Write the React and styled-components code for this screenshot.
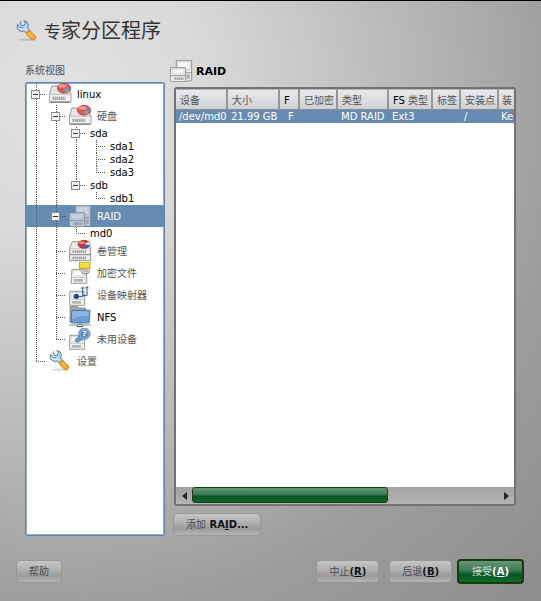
import React from 'react';
import styled, { createGlobalStyle, css } from 'styled-components';

const GlobalStyle = createGlobalStyle`
  * { box-sizing: border-box; }
  body {
    margin: 0;
    font: 10px/13px "DejaVu Sans", "Noto Sans CJK SC", sans-serif;
    color: #000;
  }
  button { font: inherit; padding: 0; margin: 0; }
`;

const Page = styled.div`
  min-height: 100vh;
  display: flex;
  flex-direction: column;
  border-top: 2px solid #000;
  border-top-width: 1px;
  background: radial-gradient(ellipse 130% 120% at 12% 16%, #e2e2e2 0%, #d9d9d9 20%, #b6b6b6 50%, #9c9c9c 72%, #8c8c8c 100%);
`;

const TitleBar = styled.header`
  display: flex;
  align-items: center;
  gap: 4px;
  height: 60px;
  padding: 0 16px;
`;

const Title = styled.h1`
  margin: 0;
  font-size: 20px;
  line-height: 28px;
  font-weight: 400;
  color: #333;
`;

const TitleLead = styled.span`
  font-size: 17px;
`;

const Main = styled.main`
  flex: 1;
  display: grid;
  grid-template-columns: minmax(140px, 26%) minmax(0, 1fr);
  gap: 5px;
  padding: 0 25px 0 25px;
`;

const Side = styled.section`
  display: flex;
  flex-direction: column;
`;

const SideLabel = styled.h2`
  margin: 0;
  padding-top: 3px;
  height: 21px;
  font-size: 10px;
  font-weight: 400;
  color: #505050;
`;

const Tree = styled.ul`
  flex: 1;
  margin: 0;
  padding: 0;
  list-style: none;
  background: #fff;
  border: 1px solid #5f86ae;
  border-radius: 2px;
  box-shadow: inset 0 0 0 1px #8fadcb;
`;

const TreeRow = styled.li`
  display: flex;
  align-items: center;
  height: ${(p) => (p.$tall ? 22 : 13)}px;
  background: ${(p) => (p.$selected ? '#678cb2' : 'transparent')};
  color: ${(p) => (p.$selected ? '#fff' : p.$dim ? '#555' : '#000')};
`;

const dots = '#555 0 1px, transparent 1px 2px';
const vertical = `repeating-linear-gradient(to bottom, ${dots})`;
const horizontal = `repeating-linear-gradient(to right, ${dots})`;

const guides = {
  none: css``,
  line: css`
    background: ${vertical} 10px 0 / 1px 100% no-repeat;
  `,
  tee: css`
    background: ${vertical} 10px 0 / 1px 100% no-repeat, ${horizontal} 10px 50% / 9px 1px no-repeat;
  `,
  end: css`
    background: ${vertical} 10px 0 / 1px 50% no-repeat, ${horizontal} 10px 50% / 9px 1px no-repeat;
  `,
};

const Guide = styled.span`
  flex: none;
  display: flex;
  align-items: center;
  width: 20px;
  height: 100%;
  padding-left: 5px;
  ${(p) => guides[p.$kind]}
`;

const Expander = styled.button`
  width: 9px;
  height: 9px;
  border: 1px solid #8a8a8a;
  background: linear-gradient(#333, #333) center / 5px 1px no-repeat, #f4f4f4;
`;

const TreeIcon = styled.span`
  flex: none;
  display: flex;
  width: 24px;
  height: 22px;
  margin-left: 3px;
  opacity: ${(p) => (p.$selected ? 0.65 : 1)};
`;

const TreeLabel = styled.span`
  flex: 1;
  white-space: nowrap;
  padding-left: 4px;
  ${(p) => p.$selected && css`
    height: 21px;
    line-height: 20px;
    border: 1px dotted #b0763c;
    padding-left: 3px;
  `}
`;

const Content = styled.section`
  display: flex;
  flex-direction: column;
  min-width: 0;
`;

const Heading = styled.h2`
  display: flex;
  align-items: center;
  gap: 2px;
  height: 26px;
  margin: 0;
  padding-bottom: 6px;
  font-size: 11px;
  font-weight: 700;
`;

const List = styled.div`
  flex: 1;
  display: flex;
  flex-direction: column;
  margin-left: 4px;
  border: 2px solid #737373;
  border-radius: 3px;
  background: #fff;
`;

const TableArea = styled.div`
  flex: 1;
  overflow: hidden;
`;

const Table = styled.table`
  width: 100%;
  table-layout: fixed;
  border-collapse: separate;
  border-spacing: 0;
  white-space: nowrap;
`;

const Column = styled.col`
  width: ${(p) => (p.$width ? `${p.$width}px` : 'auto')};
`;

const Th = styled.th`
  height: 21px;
  padding: 2px 0 0 4px;
  text-align: left;
  font-weight: 400;
  color: ${(p) => (p.$latin ? '#000' : '#555')};
  background: linear-gradient(#eaeaed, #cfcfd5);
  border-top: 1px solid #b5b5b5;
  border-right: 2px solid #969696;
  border-bottom: 1px solid #8c8c90;

  &:last-child { border-right: 0; padding-left: 3px; }
  span { color: #555; }
`;

const Td = styled.td`
  height: 13px;
  padding: 0 0 0 ${(p) => (p.$inset ? 8 : 3)}px;
  color: #fff;
  background: #678cb2;

  &:last-child { padding-left: 2px; }
`;

const ScrollBar = styled.div`
  display: flex;
  height: 17px;
  background: linear-gradient(#a2a2a2, #b4b4b4);
`;

const ScrollArrow = styled.button`
  display: flex;
  align-items: center;
  justify-content: center;
  width: 16px;
  border: 0;
  background: transparent;
`;

const ScrollTrack = styled.div`
  flex: 1;
`;

const ScrollThumb = styled.div`
  width: 64%;
  height: 16px;
  border: 1px solid #17420f;
  border-radius: 3px;
  background: linear-gradient(#659477, #3b7a53 45%, #075424 60%, #0d6427);
`;

const Actions = styled.div`
  display: flex;
  padding: 7px 0 0 3px;
`;

const Button = styled.button`
  height: 23px;
  padding: 0 12px;
  font-weight: 700;
  white-space: nowrap;
  color: #111;
  border: 1px solid #979797;
  border-radius: 4px;
  background: linear-gradient(#c6c6c6, #ababab 50%, #9b9b9b 70%, #b4b4b4);

  ${(p) => p.$primary && css`
    height: 25px;
    padding: 0 13px;
    color: #fff;
    border: 2px solid #173c0c;
    background: linear-gradient(#6a967b, #3b7a53 45%, #075424 65%, #0d6c2b);
  `}
`;

const Cjk = styled.span`
  font-weight: 400;
  color: ${(p) => (p.$light ? '#cfe0d5' : '#4c4c4c')};
`;

const Footer = styled.footer`
  display: flex;
  align-items: center;
  gap: 10px;
  padding: 23px 17px 17px 16px;
`;

const Spacer = styled.div`
  flex: 1;
`;

const FinishGroup = styled.div`
  display: flex;
  align-items: center;
  gap: 5px;
`;

function Svg({ children }) {
  return (
    <svg width="24" height="22" viewBox="0 0 72 66" aria-hidden="true">
      {children}
    </svg>
  );
}

function Slots({ x, y, w, h }) {
  return (
    <g>
      <rect x={x} y={y} width={w} height={h} fill="#c4c4c4" />
      <path d={`M${x + 3} ${y + h / 2}H${x + w}`} stroke="#9b9b9b" strokeWidth={h} strokeDasharray="2 4" />
    </g>
  );
}

function Disc({ y = 16 }) {
  return (
    <g>
      <ellipse cx="45" cy={y} rx="20" ry="15" fill="#e8504c" stroke="#c0332e" strokeWidth="2" />
      <ellipse cx="41" cy={y - 7} rx="13" ry="5" fill="#f29a95" />
      <path d={`M46 ${y}L58 ${y - 5}A15 12 0 0 1 58 ${y + 7}Z`} fill="#6f97d6" />
      <path d={`M46 ${y}L59 ${y + 7}A16 13 0 0 1 48 ${y + 12}Z`} fill="#84b866" />
      <path d={`M46 ${y}L48 ${y + 12}L38 ${y + 9}Z`} fill="#6680bd" />
    </g>
  );
}

function DiskIcon() {
  return (
    <Svg>
      <path d="M9 9H57L66 34V54Q66 58 62 58H4Q1 58 1 54V34Z" fill="#e6e6e6" stroke="#858585" strokeWidth="2.5" />
      <path d="M3 34H64V55H3Z" fill="#f2f2f2" />
      <path d="M2 34H65" stroke="#aaa" strokeWidth="2" />
      <Slots x={9} y={41} w={40} h={10} />
      <path d="M2 57H65" stroke="#6f6f6f" strokeWidth="3" />
      <Disc />
    </Svg>
  );
}

function VolumeIcon() {
  return (
    <Svg>
      <path d="M10 5H56L65 25V62H2V25Z" fill="#ececec" stroke="#808080" strokeWidth="2.5" />
      <path d="M2 44H65" stroke="#808080" strokeWidth="3" />
      <path d="M2 26H65" stroke="#b5b5b5" strokeWidth="2" />
      <Slots x={9} y={31} w={42} h={8} />
      <Slots x={9} y={50} w={42} h={8} />
      <ellipse cx="45" cy="13" rx="18" ry="12" fill="#dc3436" stroke="#98191c" strokeWidth="2" />
      <ellipse cx="38" cy="8" rx="9" ry="4" fill="#ee8a88" />
      <path d="M45 13L58 5A17 11 0 0 1 62 16Z" fill="#f2f2f2" />
      <path d="M45 13L62 16A17 11 0 0 1 45 25Z" fill="#3e67b2" />
    </Svg>
  );
}

function RaidIcon() {
  return (
    <Svg>
      <path d="M19 1H65V60Q65 63 61 63H22Q19 63 19 59Z" fill="#ececec" stroke="#848484" strokeWidth="2.5" />
      <path d="M24 5H60V27Q42 35 24 27Z" fill="#fafafa" stroke="#c6c6c6" strokeWidth="2" />
      <path d="M19 38H65" stroke="#848484" strokeWidth="2.5" />
      <Slots x={50} y={43} w={10} h={14} />
      <path d="M1 23H47V62Q47 65 43 65H5Q1 65 1 61Z" fill="#ececec" stroke="#848484" strokeWidth="2.5" />
      <path d="M6 27H42V40Q24 47 6 40Z" fill="#fafafa" stroke="#c6c6c6" strokeWidth="2" />
      <path d="M1 47H47" stroke="#848484" strokeWidth="2.5" />
      <Slots x={12} y={52} w={28} h={8} />
    </Svg>
  );
}

function SmallDrive({ x = 0 }) {
  return (
    <g transform={`translate(${x} 0)`}>
      <path d="M3 22H45L47 46V64H1V46Z" fill="#f1f1f1" stroke="#868686" strokeWidth="2.5" strokeLinejoin="round" />
      <path d="M7 26H41L42 39Q24 46 6 39Z" fill="#fbfbfb" stroke="#d0d0d0" strokeWidth="2" />
      <path d="M1 46H47" stroke="#b0b0b0" strokeWidth="2" />
      <Slots x={8} y={51} w={28} h={8} />
    </g>
  );
}

function CryptIcon() {
  return (
    <Svg>
      <SmallDrive x={6} />
      <path d="M39 20V25Q39 32 46 32H51Q58 32 58 25V20" fill="none" stroke="#8a8a80" strokeWidth="8" />
      <path d="M39 20V25Q39 31 46 31H51Q58 31 58 25V20" fill="none" stroke="#dcdcd4" strokeWidth="4" />
      <rect x="31" y="0" width="32" height="19" fill="#f1d92c" stroke="#b79a0b" strokeWidth="2.5" />
      <path d="M34 5H60M34 11H60" stroke="#fff07c" strokeWidth="2" />
    </Svg>
  );
}

function MapperIcon() {
  return (
    <Svg>
      <SmallDrive />
      <path d="M22 37H41V12M36 14L41 9L46 14M41 35H54V9M49 13L54 8L59 13" fill="none" stroke="#1f5294" strokeWidth="3" />
      <circle cx="22" cy="37" r="8" fill="#174b8a" />
    </Svg>
  );
}

function NfsIcon() {
  return (
    <Svg>
      <path d="M3 49V4Q3 1 7 1H24L30 6H50V15H12V49Z" fill="#a3a5a3" stroke="#777a76" strokeWidth="2" />
      <path d="M9 13H63L61 49Q61 51 58 51H9Q6 51 6 48Z" fill="#6b9dd5" stroke="#3a6aa5" strokeWidth="2.5" />
      <path d="M10 16H60L59 30Q34 28 9 38Z" fill="#8db6e2" />
      <path d="M0 57H66" stroke="#8a8d89" strokeWidth="3" />
      <path d="M33 52V60" stroke="#666" strokeWidth="5" />
      <ellipse cx="33" cy="59" rx="10" ry="5" fill="#666" />
      <path d="M27 58H39" stroke="#eee" strokeWidth="4" />
    </Svg>
  );
}

function UnusedIcon() {
  return (
    <Svg>
      <SmallDrive />
      <path d="M31 24L19 34Q17 43 27 43L42 33Z" fill="#6d98cc" stroke="#4b79b2" strokeWidth="2" />
      <circle cx="46" cy="17" r="17" fill="#8fb4e0" stroke="#4b79b2" strokeWidth="2.5" />
      <circle cx="46" cy="17" r="12" fill="#5d8cc5" />
      <text x="46" y="25" textAnchor="middle" fontSize="22" fontWeight="700" fill="#fff">?</text>
    </Svg>
  );
}

function WrenchIcon() {
  return (
    <Svg>
      <ellipse cx="34" cy="59" rx="27" ry="4" fill="#000" opacity=".13" />
      <path
        d="M14 4Q10 12 16 17L25 16L28 7L23 2Q36 3 37 15Q37 20 35 24L43 33L34 42L25 33Q10 37 4 25Q2 19 5 13L12 23L21 23"
        fill="#b9d3ee"
        stroke="#527fb5"
        strokeWidth="3"
        strokeLinejoin="round"
      />
      <path d="M8 24Q18 33 28 27L36 36" fill="none" stroke="#eef6fd" strokeWidth="3" />
      <path d="M39 40L51 52" stroke="#d57b12" strokeWidth="17" strokeLinecap="round" />
      <path d="M39 40L51 52" stroke="#f9a92d" strokeWidth="12" strokeLinecap="round" />
      <path d="M37 45L46 36M43 51L52 41" stroke="#ffd873" strokeWidth="3" />
    </Svg>
  );
}

const rows = [
  { label: 'linux', guides: ['tee'], open: true, icon: DiskIcon },
  { label: '硬盘', guides: ['line', 'tee'], open: true, icon: DiskIcon, dim: true },
  { label: 'sda', guides: ['line', 'line', 'tee'], open: true },
  { label: 'sda1', guides: ['line', 'line', 'line', 'tee'] },
  { label: 'sda2', guides: ['line', 'line', 'line', 'tee'] },
  { label: 'sda3', guides: ['line', 'line', 'line', 'end'] },
  { label: 'sdb', guides: ['line', 'line', 'end'], open: true },
  { label: 'sdb1', guides: ['line', 'line', 'none', 'end'] },
  { label: 'RAID', guides: ['line', 'tee'], open: true, icon: RaidIcon, selected: true },
  { label: 'md0', guides: ['line', 'line', 'end'] },
  { label: '卷管理', guides: ['line', 'tee'], icon: VolumeIcon, dim: true },
  { label: '加密文件', guides: ['line', 'tee'], icon: CryptIcon, dim: true },
  { label: '设备映射器', guides: ['line', 'tee'], icon: MapperIcon, dim: true },
  { label: 'NFS', guides: ['line', 'tee'], icon: NfsIcon },
  { label: '未用设备', guides: ['line', 'end'], icon: UnusedIcon, dim: true },
  { label: '设置', guides: ['end'], icon: WrenchIcon, dim: true },
];

const columns = [
  { title: '设备', width: 52, value: '/dev/md0' },
  { title: '大小', width: 52, value: '21.99 GB' },
  { title: 'F', width: 20, value: 'F', latin: true, inset: true },
  { title: '已加密', width: 38, value: '' },
  { title: '类型', width: 51, value: 'MD RAID' },
  { title: <>FS <span>类型</span></>, width: 44, value: 'Ext3', latin: true },
  { title: '标签', width: 28, value: '' },
  { title: '安装点', width: 38, value: '/' },
  { title: '装', value: 'Ke' },
];

function Row({ item }) {
  const Icon = item.icon;
  const last = item.guides.length - 1;
  return (
    <TreeRow role="treeitem" aria-selected={!!item.selected} $tall={!!Icon} $selected={item.selected} $dim={item.dim}>
      {item.guides.map((kind, i) => (
        <Guide key={i} $kind={kind}>
          {item.open && i === last && <Expander type="button" aria-label={`折叠 ${item.label}`} />}
        </Guide>
      ))}
      {Icon && <TreeIcon $selected={item.selected}><Icon /></TreeIcon>}
      <TreeLabel $selected={item.selected}>{item.label}</TreeLabel>
    </TreeRow>
  );
}

export default function App() {
  return (
    <>
      <GlobalStyle />
      <Page>
        <TitleBar>
          <WrenchIcon />
          <Title><TitleLead>专</TitleLead>家分区程序</Title>
        </TitleBar>
        <Main>
          <Side>
            <SideLabel id="tree-label">系统视图</SideLabel>
            <Tree role="tree" aria-labelledby="tree-label">
              {rows.map((item) => <Row key={item.label} item={item} />)}
            </Tree>
          </Side>
          <Content>
            <Heading><RaidIcon />RAID</Heading>
            <List>
              <TableArea>
                <Table>
                  <colgroup>
                    {columns.map((c, i) => <Column key={i} $width={c.width} />)}
                  </colgroup>
                  <thead>
                    <tr>{columns.map((c, i) => <Th key={i} scope="col" $latin={c.latin}>{c.title}</Th>)}</tr>
                  </thead>
                  <tbody>
                    <tr>{columns.map((c, i) => <Td key={i} $inset={c.inset}>{c.value}</Td>)}</tr>
                  </tbody>
                </Table>
              </TableArea>
              <ScrollBar>
                <ScrollArrow type="button" aria-label="向左滚动">
                  <svg width="5" height="8" viewBox="0 0 5 8"><path d="M5 0V8L0 4Z" fill="#222" /></svg>
                </ScrollArrow>
                <ScrollTrack><ScrollThumb /></ScrollTrack>
                <ScrollArrow type="button" aria-label="向右滚动">
                  <svg width="5" height="8" viewBox="0 0 5 8"><path d="M0 0V8L5 4Z" fill="#222" /></svg>
                </ScrollArrow>
              </ScrollBar>
            </List>
            <Actions>
              <Button type="button"><Cjk>添加</Cjk> RA<u>I</u>D...</Button>
            </Actions>
          </Content>
        </Main>
        <Footer>
          <Button type="button"><Cjk>帮助</Cjk></Button>
          <Spacer />
          <Button type="button"><Cjk>中止</Cjk>(<u>R</u>)</Button>
          <FinishGroup>
            <Button type="button"><Cjk>后退</Cjk>(<u>B</u>)</Button>
            <Button type="button" $primary><Cjk $light>接受</Cjk>(<u>A</u>)</Button>
          </FinishGroup>
        </Footer>
      </Page>
    </>
  );
}
